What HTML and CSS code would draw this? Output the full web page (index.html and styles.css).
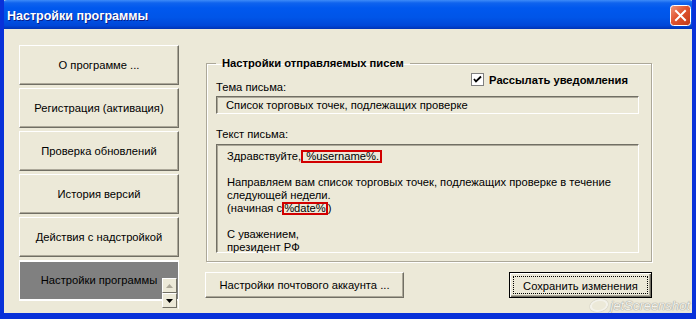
FILE: index.html
```html
<!DOCTYPE html>
<html lang="ru">
<head>
    <meta charset="UTF-8">
    <title>Настройки программы</title>
    <link rel="stylesheet" href="styles.css">
</head>
<body>
    <div class="window">
        <!-- Заголовок окна -->
        <div class="titlebar">
            <span class="title">Настройки программы</span>
            <span class="close">
                <svg width="21" height="21" viewBox="0 0 21 21">
                    <defs>
                        <linearGradient id="cg" x1="0" y1="0" x2="1" y2="1">
                            <stop offset="0" stop-color="#F0997E"/>
                            <stop offset="0.45" stop-color="#E1542F"/>
                            <stop offset="1" stop-color="#C13A16"/>
                        </linearGradient>
                    </defs>
                    <rect x="0.5" y="0.5" width="20" height="20" rx="3" fill="url(#cg)" stroke="#fff"/>
                    <path d="M6 6 L15 15 M15 6 L6 15" stroke="#fff" stroke-width="2" stroke-linecap="square"/>
                </svg>
            </span>
        </div>

        <div class="content">
            <!-- Меню слева -->
            <div class="menu">
                <button class="menu-btn">О программе ...</button>
                <button class="menu-btn">Регистрация (активация)</button>
                <button class="menu-btn">Проверка обновлений</button>
                <button class="menu-btn">История версий</button>
                <button class="menu-btn">Действия с надстройкой</button>
                <div class="list">
                    <div class="list-item">Настройки программы</div>
                    <div class="scroll">
                        <span class="arrow">
                            <svg width="7" height="4" viewBox="0 0 7 4"><path d="M3.5 0 L7 4 L0 4 Z" fill="#ACA899"/></svg>
                        </span>
                        <span class="arrow">
                            <svg width="7" height="4" viewBox="0 0 7 4"><path d="M0 0 L7 0 L3.5 4 Z" fill="#000"/></svg>
                        </span>
                    </div>
                </div>
            </div>

            <!-- Настройки писем -->
            <div class="main">
                <fieldset class="group">
                    <legend>Настройки отправляемых писем</legend>
                    <div class="row">
                        <span class="label">Тема письма:</span>
                        <span class="check">
                            <svg width="13" height="13" viewBox="0 0 13 13">
                                <rect x="0.5" y="0.5" width="12" height="12" fill="#fff" stroke="#808080"/>
                                <path d="M3 6 L5 8.5 L10 3.5" fill="none" stroke="#000" stroke-width="1.8"/>
                            </svg>
                            Рассылать уведомления
                        </span>
                    </div>
                    <div class="field">Список торговых точек, подлежащих проверке</div>
                    <span class="label label-memo">Текст письма:</span>
                    <div class="memo">
                        <p>Здравствуйте, <span class="mark">%username%.</span></p>
                        <p>&nbsp;</p>
                        <p>Направляем вам список торговых точек, подлежащих проверке в течение</p>
                        <p>следующей недели.</p>
                        <p>(начиная с<span class="mark mark-date">%date%</span>)</p>
                        <p>&nbsp;</p>
                        <p>С уважением,</p>
                        <p>президент РФ</p>
                    </div>
                </fieldset>
                <div class="actions">
                    <button class="btn btn-mail">Настройки почтового аккаунта ...</button>
                    <button class="btn btn-save"><span class="focus">Сохранить изменения</span></button>
                </div>
            </div>
        </div>

        <div class="watermark"><span class="logo"></span>jetScreenshot</div>
    </div>
</body>
</html>
```

FILE: styles.css
```css
body {
    margin: 0;
    padding: 0;
    font-family: "Liberation Sans", Arial, sans-serif;
    font-size: 11.2px;
    color: #000;
    background-color: #ECE9D8;
}
.window {
    position: relative;
    width: 696px;
    height: 319px;
    box-sizing: border-box;
    display: flex;
    flex-direction: column;
    background-color: #ECE9D8;
    border-left: 4px solid #0831D9;
    border-right: 4px solid #0831D9;
    border-bottom: 6px solid #0831D9;
    overflow: hidden;
}
.titlebar {
    height: 29px;
    margin: 0 -4px;
    padding: 0 5px 0 7px;
    display: flex;
    align-items: center;
    justify-content: space-between;
    background: linear-gradient(#3D8BF8 0, #0F63EE 3px, #0058EE 8px, #0055E8 60%, #0047D8 88%, #0033B5 100%);
    border-radius: 7px 7px 0 0;
}
.title {
    color: #fff;
    font-weight: bold;
    font-size: 12.5px;
    text-shadow: 1px 1px 0 #0A1E8A;
    padding-top: 2px;
}
.close {
    display: flex;
    margin-top: 1px;
}
.content {
    flex: 1;
    display: flex;
}
.menu {
    width: 160px;
    margin-left: 15px;
    padding-top: 16px;
    display: flex;
    flex-direction: column;
    gap: 3px;
}
.menu-btn {
    height: 40px;
    font-family: inherit;
    font-size: 11.2px;
    background-color: #ECE9D8;
    border: 1px solid;
    border-color: #fff #716F64 #716F64 #fff;
    box-shadow: inset -1px -1px 0 #ACA899;
    padding: 0;
}
.list {
    position: relative;
    height: 48px;
    border-top: 1px solid #fff;
    border-right: 1px solid #fff;
}
.list-item {
    height: 37px;
    line-height: 37px;
    text-align: center;
    background-color: #808080;
    border-left: 1px solid #fff;
    border-top: 1px solid #fff;
    border-bottom: 2px solid #fff;
}
.scroll {
    position: absolute;
    right: 1px;
    bottom: 1px;
    display: flex;
    flex-direction: column;
}
.arrow {
    width: 15px;
    height: 15px;
    box-sizing: border-box;
    display: flex;
    align-items: center;
    justify-content: center;
    background-color: #ECE9D8;
    border: 1px solid;
    border-color: #fff #716F64 #716F64 #fff;
}
.main {
    margin-left: 27px;
    padding-top: 28px;
    width: 446px;
}
.group {
    margin: 0;
    padding: 0 12px 7px 9px;
    height: 205px;
    box-sizing: border-box;
    border: 1px solid #ACA899;
    box-shadow: 1px 1px 0 #fff, inset 1px 1px 0 #fff;
    display: flex;
    flex-direction: column;
}
.group legend {
    font-weight: bold;
    padding: 0 6px;
    line-height: 13px;
}
.row {
    display: flex;
    justify-content: space-between;
    align-items: flex-end;
    margin-top: 3px;
}
.label {
    line-height: 13px;
}
.check {
    display: flex;
    align-items: center;
    gap: 5px;
    font-weight: bold;
    margin-bottom: 8px;
    margin-right: 11px;
}
.field {
    margin-top: 2px;
    height: 18px;
    line-height: 16px;
    box-sizing: border-box;
    padding-left: 9px;
    border: 1px solid;
    border-color: #716F64 #fff #fff #716F64;
    box-shadow: inset 1px 1px 0 #ACA899;
}
.label-memo {
    margin-top: 14px;
}
.memo {
    margin-top: 3px;
    height: 109px;
    box-sizing: border-box;
    padding: 5px 0 0 10px;
    border: 1px solid;
    border-color: #716F64 #fff #fff #716F64;
    box-shadow: inset 1px 1px 0 #ACA899;
}
.memo p {
    margin: 0;
    line-height: 13px;
}
.mark {
    display: inline-block;
    line-height: 9px;
    padding: 0 1px 0 3px;
    margin-left: -3px;
    border: 2px solid #D10000;
}
.mark-date {
    padding: 0;
    margin-left: 0;
}
.actions {
    margin-top: 10px;
    display: flex;
    justify-content: space-between;
}
.btn {
    height: 26px;
    font-family: inherit;
    font-size: 11.2px;
    background-color: #ECE9D8;
    border: 1px solid;
    border-color: #fff #716F64 #716F64 #fff;
    box-shadow: inset -1px -1px 0 #ACA899;
    padding: 0;
}
.btn-mail {
    width: 199px;
    margin-left: -1px;
}
.btn-save {
    width: 143px;
    border: 1px solid #000;
    box-shadow: inset 1px 1px 0 #fff, inset -1px -1px 0 #716F64, inset -2px -2px 0 #ACA899;
    padding: 3px;
}
.focus {
    display: block;
    height: 100%;
    line-height: 18px;
    box-sizing: border-box;
    border: 1px dotted #000;
}
.watermark {
    position: absolute;
    right: 2px;
    bottom: 0;
    display: flex;
    align-items: center;
    gap: 3px;
    font-size: 13px;
    font-style: italic;
    color: #F4F3EC;
    text-shadow: 0 0 1px #8A8A8A, 0 0 1px #8A8A8A;
    opacity: 0.9;
}
.logo {
    width: 14px;
    height: 9px;
    border: 2px solid #F4F3EC;
    border-radius: 50%;
    box-shadow: 0 0 1px #8A8A8A;
    transform: skewX(-15deg);
}
```
